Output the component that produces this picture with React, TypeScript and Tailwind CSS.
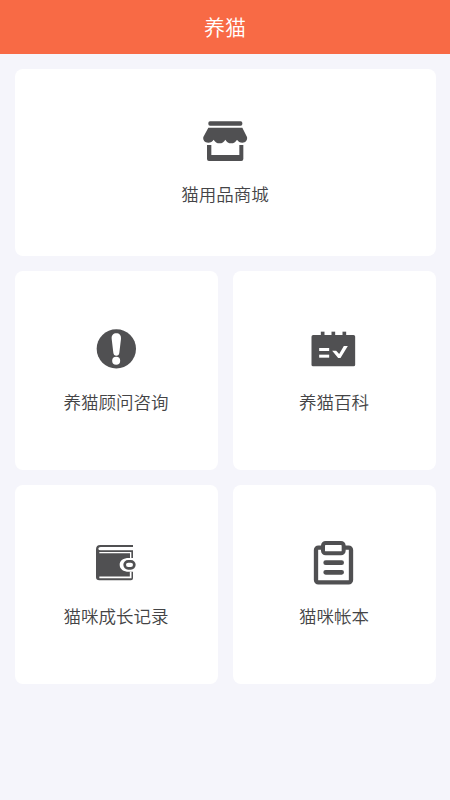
import type { ReactNode } from "react";

interface Entry {
  label: string;
  icon: ReactNode;
  wide?: boolean;
}

function ShopIcon() {
  return (
    <svg viewBox="62 21 144 144" className="size-12" fill="currentColor">
      <rect x="84" y="34" width="102" height="13" rx="5" />
      <path d="M84 53H186L200 81C202 90 196 98 186 98C179 98 174 95 170 89C166 96 160 100 152.500 100C145 100 139 96 135 89C131 96 125 100 117.500 100C110 100 104 96 100 89C96 95 91 98 84 98C73 98 67 90 69 81Z" />
      <path d="M80 105H93V135H177V105H189V147Q189 153 183 153H86Q80 153 80 147Z" />
    </svg>
  );
}

function AdviceIcon() {
  return (
    <svg viewBox="126 15 144 144" className="size-12" fill="currentColor">
      <circle cx="199" cy="86.500" r="59" />
      <path
        fill="#fff"
        d="M199 40C208 40 214 46 213 56L208 98Q207 107 199 107Q191 107 190 98L185 56C184 46 190 40 199 40Z"
      />
      <circle cx="198.500" cy="122" r="12" fill="#fff" />
    </svg>
  );
}

function WikiIcon() {
  return (
    <svg viewBox="60.5 15 144 144" className="size-12" fill="currentColor">
      <rect x="65" y="45" width="131" height="94" rx="5" />
      <rect x="93" y="35" width="11" height="14" />
      <rect x="125" y="35" width="11" height="14" />
      <rect x="158" y="35" width="11" height="14" />
      <rect x="88" y="84" width="30" height="9" fill="#fff" />
      <rect x="88" y="104" width="30" height="9" fill="#fff" />
      <path d="M127 92H139L148 102L162 78H174L152 114H145Z" fill="#fff" />
    </svg>
  );
}

function WalletIcon() {
  return (
    <svg viewBox="126 27 144 144" className="size-12" fill="none" stroke="currentColor">
      <path
        fill="currentColor"
        stroke="none"
        d="M138 58Q138 45 151 45H249V51H152Q145 51 145 56Q145 61 152 61H249V84H237C220 84 209 92 209 104C209 117 220 125 237 125H249V145Q249 151 243 151H148Q138 151 138 142Z"
      />
      <path d="M148 68H242V84" stroke="#fff" strokeWidth="4" />
      <path d="M242 125V142H148" stroke="#fff" strokeWidth="5" />
      <rect x="224" y="94" width="29" height="21" rx="10.500" strokeWidth="8" />
    </svg>
  );
}

function LedgerIcon() {
  return (
    <svg viewBox="60 27 144 144" className="size-12" fill="none" stroke="currentColor">
      <rect x="78" y="53" width="105" height="104" rx="7" strokeWidth="13" />
      <rect x="99" y="39" width="62" height="31" rx="8" fill="#fff" strokeWidth="12" />
      <path d="M107 98H155M107 127H155" strokeWidth="14" strokeLinecap="round" />
    </svg>
  );
}

const entries: Entry[] = [
  { label: "猫用品商城", icon: <ShopIcon />, wide: true },
  { label: "养猫顾问咨询", icon: <AdviceIcon /> },
  { label: "养猫百科", icon: <WikiIcon /> },
  { label: "猫咪成长记录", icon: <WalletIcon /> },
  { label: "猫咪帐本", icon: <LedgerIcon /> },
];

export default function App() {
  return (
    <div className="min-h-screen bg-[#f5f5fb] font-['Noto_Sans_CJK_SC',sans-serif]">
      {/* Header */}
      <header className="flex h-[54px] items-center justify-center bg-[#f86a45] pb-0.5">
        <h1 className="text-[21px] leading-none font-[350] text-white">养猫</h1>
      </header>

      {/* Entries */}
      <main className="grid grid-cols-2 gap-[15px] pt-[15px] pr-3.5 pl-[15px]">
        {entries.map((entry) => (
          <button
            key={entry.label}
            className={`flex flex-col items-center justify-center gap-4 rounded-lg bg-white pr-px pb-0.5 text-[#505052] ${
              entry.wide ? "col-span-2 h-[187px]" : "h-[199px]"
            }`}
          >
            {entry.icon}
            <span className="text-[17.5px] leading-[26px] font-[350] text-[#444446]">
              {entry.label}
            </span>
          </button>
        ))}
      </main>
    </div>
  );
}
